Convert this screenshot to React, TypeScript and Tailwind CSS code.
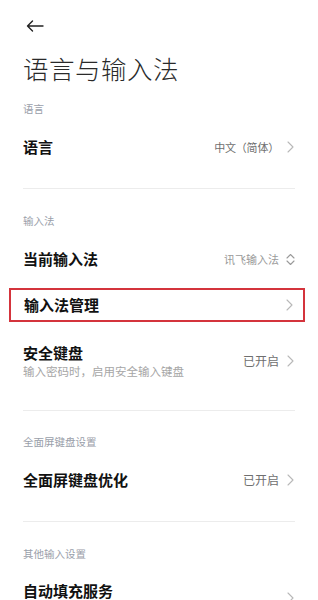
import React from 'react';

const font = { fontFamily: '"Noto Sans CJK SC", "Noto Sans", sans-serif' };

const Chevron: React.FC = () => (
  <svg width="7" height="12" viewBox="0 0 7 12" className="shrink-0">
    <path d="M1 1l5 5-5 5" fill="none" stroke="#b8b8b8" strokeWidth="1.1" strokeLinecap="round" strokeLinejoin="round" />
  </svg>
);

const UpDown: React.FC = () => (
  <svg width="9" height="13" viewBox="0 0 9 13" className="shrink-0">
    <path d="M1 5l3.5-3.5L8 5M1 8l3.5 3.5L8 8" fill="none" stroke="#9a9a9a" strokeWidth="1.1" strokeLinecap="round" strokeLinejoin="round" />
  </svg>
);

const SectionLabel: React.FC<{ text: string; className?: string }> = ({ text, className = '' }) => (
  <div className={`text-[10.5px] leading-[14px] text-[#9aa0aa] ${className}`}>{text}</div>
);

interface RowProps {
  title: string;
  value?: string;
  icon?: 'chevron' | 'updown';
  className?: string;
  valueClass?: string;
}

const Row: React.FC<RowProps> = ({ title, value, icon = 'chevron', className = '', valueClass = 'text-[12px] text-[#6f6f6f]' }) => (
  <div className={`flex items-center h-[46px] ${className}`}>
    <span className="flex-1 text-[15px] font-semibold text-[#111]">{title}</span>
    {value && <span className={`mr-[6px] ${valueClass}`}>{value}</span>}
    <span className="w-[10px] flex justify-center">{icon === 'updown' ? <UpDown /> : <Chevron />}</span>
  </div>
);

const Divider: React.FC<{ className?: string }> = ({ className = '' }) => (
  <div className={`h-px bg-[#ececec] ${className}`} />
);

export default function App() {
  return (
    <div className="w-[318px] h-[600px] overflow-hidden bg-white" style={font}>
      <div className="h-[50px] flex items-center pl-[26px] pt-[1px]">
        <svg width="18" height="12" viewBox="0 0 18 12">
          <path d="M17 6H1.5M6.5 1L1.5 6l5 5" fill="none" stroke="#222" strokeWidth="1.4" strokeLinecap="round" strokeLinejoin="round" />
        </svg>
      </div>
      <div className="px-[23px]">
        <h1 className="h-[36px] flex items-center text-[25.5px] font-light text-[#2a2a2a] tracking-[0.5px]">语言与输入法</h1>

        <SectionLabel text="语言" className="mt-[16px]" />
        <Row
          title="语言"
          value="中文（简体）"
          className="mt-[8px]"
          valueClass="text-[11px] text-[#6f6f6f] tracking-[-0.2px]"
        />
        <Divider className="mt-[18px]" />

        <SectionLabel text="输入法" className="mt-[25px]" />
        <Row
          title="当前输入法"
          value="讯飞输入法"
          icon="updown"
          className="mt-[8px]"
          valueClass="text-[11px] text-[#9a9a9a]"
        />
        <div className="mt-[6px] -ml-[14px] -mr-[10px] h-[34px] border-2 border-[#d4343c] flex items-center pl-[13px] pr-[9px]">
          <span className="flex-1 text-[15px] font-semibold text-[#111]">输入法管理</span>
          <span className="w-[10px] flex justify-center"><Chevron /></span>
        </div>
        <div className="mt-[11px] h-[56px] flex items-center">
          <div className="flex-1">
            <div className="text-[15px] font-semibold text-[#111] leading-[20px]">安全键盘</div>
            <div className="text-[11.5px] text-[#a6a6a6] leading-[16px]">输入密码时，启用安全输入键盘</div>
          </div>
          <span className="mr-[6px] text-[12px] text-[#6f6f6f]">已开启</span>
          <span className="w-[10px] flex justify-center"><Chevron /></span>
        </div>
        <Divider className="mt-[21px]" />

        <SectionLabel text="全面屏键盘设置" className="mt-[24px]" />
        <Row title="全面屏键盘优化" value="已开启" className="mt-[8px]" />
        <Divider className="mt-[18px]" />

        <SectionLabel text="其他输入设置" className="mt-[25px]" />
        <div className="mt-[19px] flex items-start">
          <div className="flex-1 text-[15px] font-semibold text-[#111] leading-[22px]">自动填充服务</div>
          <span className="w-[10px] flex justify-center mt-[12px]"><Chevron /></span>
        </div>
      </div>
    </div>
  );
}
